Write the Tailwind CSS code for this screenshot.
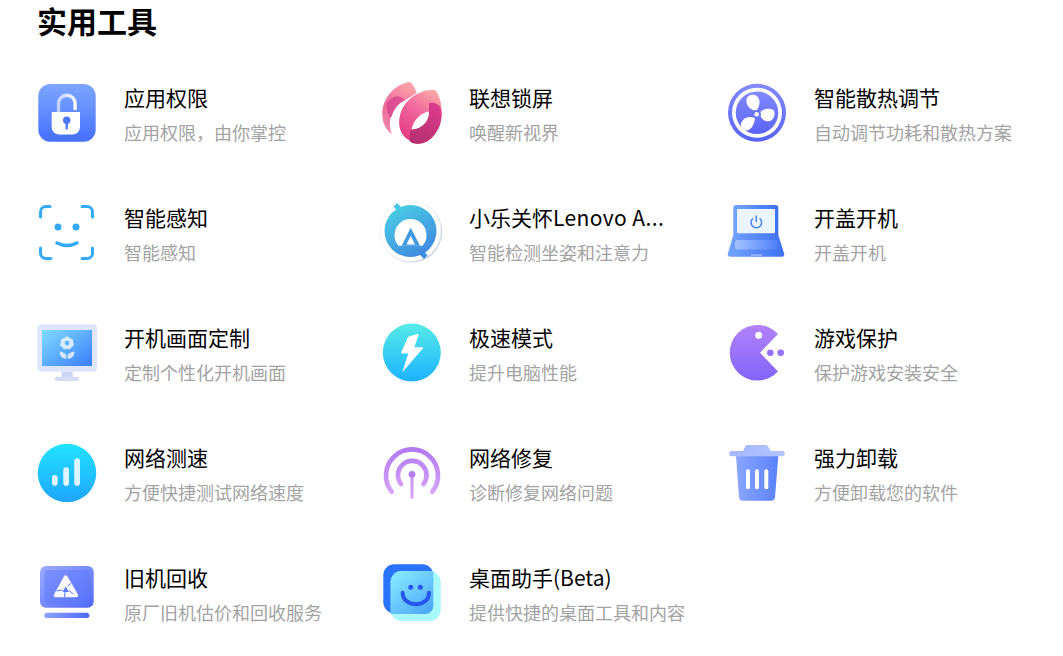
<!DOCTYPE html>
<html lang="zh-CN">
<head>
  <meta charset="UTF-8">
  <title>实用工具</title>
  <script src="https://cdn.jsdelivr.net/npm/@tailwindcss/browser@4"></script>
</head>
<body class="bg-white h-[656px] overflow-hidden font-['Noto_Sans_CJK_SC','Noto_Sans',sans-serif]">
  <svg width="0" height="0" class="absolute">
    <defs>
      <linearGradient id="gLock" x1="0" y1="0" x2="0" y2="1"><stop offset="0" stop-color="#7ea6ff"/><stop offset="1" stop-color="#4570fb"/></linearGradient>
      <linearGradient id="gShackle" gradientUnits="userSpaceOnUse" x1="20" y1="0" x2="40" y2="0"><stop offset="0" stop-color="#ffffff" stop-opacity=".55"/><stop offset="1" stop-color="#ffffff"/></linearGradient>
      <linearGradient id="gPetalL" x1="0.7" y1="0" x2="0.3" y2="1"><stop offset="0" stop-color="#fda3a8"/><stop offset=".6" stop-color="#ec6a9c"/><stop offset="1" stop-color="#f08aa8"/></linearGradient>
      <linearGradient id="gPetalR" x1="0.8" y1="0" x2="0.3" y2="1"><stop offset="0" stop-color="#fdaaa8"/><stop offset=".45" stop-color="#f2689c"/><stop offset="1" stop-color="#e23a82"/></linearGradient>
      <linearGradient id="gPetalD" x1="0.7" y1="0" x2="0.3" y2="1"><stop offset="0" stop-color="#dc3c8c"/><stop offset="1" stop-color="#b5306f"/></linearGradient>
      <linearGradient id="gFan" x1="0" y1="0" x2="0" y2="1"><stop offset="0" stop-color="#8389ff"/><stop offset="1" stop-color="#5a64f5"/></linearGradient>
      <linearGradient id="gAle" x1="0.2" y1="0" x2="0.8" y2="1"><stop offset="0" stop-color="#49cfe3"/><stop offset="1" stop-color="#3f86e0"/></linearGradient>
      <linearGradient id="gLaptop" x1="0" y1="0" x2="1" y2="0"><stop offset="0" stop-color="#74a4ff"/><stop offset="1" stop-color="#3d70f2"/></linearGradient>
      <linearGradient id="gPad" x1="0" y1="0" x2="1" y2="0"><stop offset="0" stop-color="#a4c3ff"/><stop offset="1" stop-color="#4f80f5"/></linearGradient>
      <linearGradient id="gScreen" x1="0" y1="0" x2="1" y2="1"><stop offset="0" stop-color="#7fdcff"/><stop offset="1" stop-color="#3a7dfb"/></linearGradient>
      <linearGradient id="gBolt" x1="0" y1="0" x2="0" y2="1"><stop offset="0" stop-color="#56ebe6"/><stop offset="1" stop-color="#1cb2ff"/></linearGradient>
      <linearGradient id="gPac" x1="0" y1="0" x2="0" y2="1"><stop offset="0" stop-color="#b183fb"/><stop offset="1" stop-color="#8164f8"/></linearGradient>
      <linearGradient id="gNet" x1="0" y1="0" x2="0" y2="1"><stop offset="0" stop-color="#22e3ff"/><stop offset="1" stop-color="#1fa5ff"/></linearGradient>
      <linearGradient id="gWifi" gradientUnits="userSpaceOnUse" x1="0" y1="4" x2="0" y2="56"><stop offset="0" stop-color="#af78f2"/><stop offset="1" stop-color="#dcaaf8"/></linearGradient>
      <linearGradient id="gTrash" x1="0" y1="0" x2="1" y2="0"><stop offset="0" stop-color="#8aa6ff"/><stop offset="1" stop-color="#5b82fb"/></linearGradient>
      <linearGradient id="gLid" x1="0" y1="0" x2="1" y2="0"><stop offset="0" stop-color="#a5b8fd"/><stop offset="1" stop-color="#b2c3ff"/></linearGradient>
      <linearGradient id="gOld" x1="0" y1="0" x2="1" y2="1"><stop offset="0" stop-color="#9cacff"/><stop offset="1" stop-color="#4f69fb"/></linearGradient>
      <linearGradient id="gBar" x1="0" y1="0" x2="1" y2="0"><stop offset="0" stop-color="#8ea2ff"/><stop offset="1" stop-color="#4f69fb"/></linearGradient>
      <linearGradient id="gFace" x1="0" y1="0" x2="0.8" y2="1"><stop offset="0" stop-color="#8ceeff"/><stop offset="1" stop-color="#4faaf8"/></linearGradient>
    </defs>
  </svg>

  <h1 class="pl-[37px] h-[53px] text-[30px] leading-[40px] font-bold text-black">实用工具</h1>

  <div class="grid grid-cols-[345px_345px_300px] auto-rows-[120px] pl-[37px]">

    <!-- 应用权限 -->
    <div class="flex items-center gap-[27px]">
      <svg class="w-[60px] h-[60px] shrink-0" viewBox="0 0 60 60">
        <rect x="1.300" y="1" width="57.400" height="57.700" rx="12" fill="url(#gLock)"/>
        <path d="M21.500 29V20.500a8.300 8.300 0 0 1 16.600 0V27" fill="none" stroke="url(#gShackle)" stroke-width="3.400"/>
        <path d="M14.700 29H43V44a7.500 7.500 0 0 1-7.500 7.500H22.200A7.500 7.500 0 0 1 14.700 44Z" fill="#fff"/>
        <circle cx="29.700" cy="37.300" r="3.700" fill="#4a76fb"/>
        <rect x="28.500" y="38" width="2.400" height="8.500" rx="1.200" fill="#4a76fb"/>
      </svg>
      <div class="min-w-0">
        <div class="text-[21px] leading-[30px] text-black mb-[7px]">应用权限</div>
        <div class="text-[18px] leading-[26px] text-[#a3a3a3]">应用权限，由你掌控</div>
      </div>
    </div>

    <!-- 联想锁屏 -->
    <div class="flex items-center gap-[27px]">
      <svg class="w-[60px] h-[60px] shrink-0 overflow-visible" viewBox="0 0 60 60">
        <path d="M28-1C16 0 1 12 .3 30 0 40 4 47 9.700 51.300 7 42 7.500 36 10.500 30 13 24 17 20 22 18L34.700 10C33 5 31 1 28-1Z" fill="url(#gPetalL)"/>
        <path d="M5 20C10 12 18 11 23 17 16 20 12 26 9 35 5 30 4 25 5 20Z" fill="#d9488f" fill-opacity=".85"/>
        <path d="M53 6.700C40 6 23 14 18 32 15 44 20 54 27 57 30 60 34 61 38 60.700 48 60 58 50 59.700 30 60 20 57 11 53 6.700Z" fill="url(#gPetalR)"/>
        <path d="M47 20C52 19 57 21 58.500 25 60 30 60 35 58 42 54 52 46 60 36 60.700 32 61 29 60 27.500 57.500 27.500 54 28 50 29 46L47 29Z" fill="url(#gPetalD)"/>
        <path d="M29.500 46.500C31 38 38 30 47 28.500 47.500 37 41 46 29.500 46.500Z" fill="#fff"/>
      </svg>
      <div class="min-w-0">
        <div class="text-[21px] leading-[30px] text-black mb-[7px]">联想锁屏</div>
        <div class="text-[18px] leading-[26px] text-[#a3a3a3]">唤醒新视界</div>
      </div>
    </div>

    <!-- 智能散热调节 -->
    <div class="flex items-center gap-[27px]">
      <svg class="w-[60px] h-[60px] shrink-0" viewBox="0 0 60 60">
        <circle cx="30" cy="29.700" r="29" fill="url(#gFan)"/>
        <circle cx="30" cy="29.700" r="25" fill="#fff"/>
        <circle cx="30" cy="29.700" r="21.300" fill="url(#gFan)"/>
        <path d="M29.500 27.500C23 27.500 18.500 22 19.500 16 21 11.500 27 10.500 30.500 13.500 34 18 32.500 23.500 29.500 27.500Z" fill="#fff"/>
        <path d="M32.500 30C36 25.500 42.500 24.500 46.500 27 49 30.500 47 36.500 43 38 38.500 39.500 33.500 36 32.500 30Z" fill="#fff"/>
        <path d="M28 35C27.500 40.500 24.500 47 20 47.500 15.500 48 12.500 43.500 14.500 39 17 34.500 23 32.500 28 35Z" fill="#fff"/>
        <circle cx="29.700" cy="31.300" r="4.300" fill="#6d75fa"/>
        <circle cx="29.700" cy="31.300" r="2.300" fill="#fff"/>
      </svg>
      <div class="min-w-0">
        <div class="text-[21px] leading-[30px] text-black mb-[7px]">智能散热调节</div>
        <div class="text-[18px] leading-[26px] text-[#a3a3a3]">自动调节功耗和散热方案</div>
      </div>
    </div>

    <!-- 智能感知 -->
    <div class="flex items-center gap-[27px]">
      <svg class="w-[60px] h-[60px] shrink-0" viewBox="0 0 60 60" fill="none" stroke="#35a9fb" stroke-width="3" stroke-linecap="round">
        <path d="M13 3.500H9a5.500 5.500 0 0 0-5.500 5.500v5"/>
        <path d="M45 3.500h5a5.500 5.500 0 0 1 5.500 5.500v5"/>
        <path d="M3.500 45v5A5.500 5.500 0 0 0 9 55.500h5"/>
        <path d="M55.500 45v5a5.500 5.500 0 0 1-5.500 5.500h-5"/>
        <path d="M20 40q10 5 20 0" stroke-width="3.500"/>
        <circle cx="21" cy="24" r="3.500" fill="#35a9fb" stroke="none"/>
        <circle cx="39" cy="24" r="3.500" fill="#35a9fb" stroke="none"/>
      </svg>
      <div class="min-w-0">
        <div class="text-[21px] leading-[30px] text-black mb-[7px]">智能感知</div>
        <div class="text-[18px] leading-[26px] text-[#a3a3a3]">智能感知</div>
      </div>
    </div>

    <!-- 小乐关怀 -->
    <div class="flex items-center gap-[27px]">
      <svg class="w-[60px] h-[60px] shrink-0 overflow-visible" viewBox="0 0 60 60">
        <circle cx="29.300" cy="28.800" r="30.800" fill="#c6ccd2"/>
        <circle cx="28.500" cy="28" r="30.500" fill="#fff" stroke="#eef0f2" stroke-width=".8"/>
        <circle cx="28.500" cy="28" r="26" fill="url(#gAle)"/>
        <path d="M11.500 3.500L15 0 21 6 17 10Z" fill="#46c8e4"/>
        <path d="M45.500 52.500L42 56 36 50 40 46Z" fill="#3f8ee0"/>
        <path d="M16.500 42.700A16 16 0 1 1 40.500 42.700Z" fill="#fff"/>
        <path d="M28.700 24.700L38 42.700H19.700Z" fill="#3f9ae2"/>
        <path d="M28.700 32.700L33 41.500H24.500Z" fill="#fff"/>
      </svg>
      <div class="min-w-0">
        <div class="whitespace-nowrap text-[21px] leading-[30px] text-black mb-[7px]">小乐关怀<span class="tracking-[0.4px]">Lenovo A...</span></div>
        <div class="text-[18px] leading-[26px] text-[#a3a3a3]">智能检测坐姿和注意力</div>
      </div>
    </div>

    <!-- 开盖开机 -->
    <div class="flex items-center gap-[27px]">
      <svg class="w-[60px] h-[60px] shrink-0" viewBox="0 0 60 60">
        <path d="M6.300 5a3 3 0 0 1 3-3h39a3 3 0 0 1 3 3v28h-45Z" fill="url(#gLaptop)"/>
        <rect x="10" y="6" width="38" height="24.300" rx="1" fill="#eaf5ff"/>
        <path d="M6.300 32h45L57.300 51a2.500 2.500 0 0 1-2.500 2.700H3.200A2.500 2.500 0 0 1 .7 51Z" fill="url(#gLaptop)"/>
        <rect x="8" y="37" width="42.700" height="9.500" rx="2.500" fill="url(#gPad)"/>
        <rect x="24" y="51.500" width="11" height="1.200" fill="#a9c6ff"/>
        <path d="M25.600 15.800a5.300 5.300 0 1 0 7.500 0" fill="none" stroke="#4e82f3" stroke-width="1.500" stroke-linecap="round"/>
        <path d="M29.300 13v5.500" stroke="#4e82f3" stroke-width="1.500" stroke-linecap="round"/>
      </svg>
      <div class="min-w-0">
        <div class="text-[21px] leading-[30px] text-black mb-[7px]">开盖开机</div>
        <div class="text-[18px] leading-[26px] text-[#a3a3a3]">开盖开机</div>
      </div>
    </div>

    <!-- 开机画面定制 -->
    <div class="flex items-center gap-[27px]">
      <svg class="w-[60px] h-[60px] shrink-0" viewBox="0 0 60 60">
        <rect x="0.300" y="1.300" width="59.700" height="47.400" rx="4" fill="#dfe6fb"/>
        <rect x="5" y="7" width="50" height="36" fill="url(#gScreen)"/>
        <rect x="24.700" y="48.700" width="11" height="6" fill="#ccd6f4"/>
        <rect x="18" y="53.700" width="24" height="4.300" rx="1.500" fill="#d6def7"/>
        <g fill="#fff" fill-opacity=".75">
          <path fill-rule="evenodd" d="M30 13.500a2.800 2.800 0 0 1 2.700 2 2.800 2.800 0 0 1 3.300 3.800 2.800 2.800 0 0 1-1.300 4.800 2.800 2.800 0 0 1-4.700 1.400 2.800 2.800 0 0 1-4.700-1.400 2.800 2.800 0 0 1-1.300-4.800 2.800 2.800 0 0 1 3.300-3.800 2.800 2.800 0 0 1 2.700-2Zm0 4.300a2.300 2.300 0 1 0 0 4.600 2.300 2.300 0 0 0 0-4.600Z"/>
          <path d="M22.500 28.500q5 .5 6.800 3.800V36q-6.500-.5-6.800-7.500Z"/>
          <path d="M37.500 28.500q-5 .5-6.800 3.800V36q6.500-.5 6.800-7.500Z"/>
        </g>
      </svg>
      <div class="min-w-0">
        <div class="text-[21px] leading-[30px] text-black mb-[7px]">开机画面定制</div>
        <div class="text-[18px] leading-[26px] text-[#a3a3a3]">定制个性化开机画面</div>
      </div>
    </div>

    <!-- 极速模式 -->
    <div class="flex items-center gap-[27px]">
      <svg class="w-[60px] h-[60px] shrink-0" viewBox="0 0 60 60">
        <circle cx="29.800" cy="29.500" r="29" fill="url(#gBolt)"/>
        <path d="M34.500 11.200L27 13.500a2 2 0 0 0-1.300 1.200L19.300 29a1 1 0 0 0 1 1.400h6L20.300 49.300 41 25.200a.6.6 0 0 0-.5-1h-8.200l4-11.200a1.300 1.300 0 0 0-1.800-1.800Z" fill="#fff"/>
      </svg>
      <div class="min-w-0">
        <div class="text-[21px] leading-[30px] text-black mb-[7px]">极速模式</div>
        <div class="text-[18px] leading-[26px] text-[#a3a3a3]">提升电脑性能</div>
      </div>
    </div>

    <!-- 游戏保护 -->
    <div class="flex items-center gap-[27px]">
      <svg class="w-[60px] h-[60px] shrink-0" viewBox="0 0 60 60">
        <path d="M51 11A27.800 27.800 0 1 0 51 48.500L33 29.700Z" fill="url(#gPac)"/>
        <circle cx="31.700" cy="12.300" r="3.500" fill="#fff"/>
        <circle cx="43.300" cy="29.700" r="3.300" fill="#9472f9"/>
        <circle cx="53.700" cy="29.700" r="3.300" fill="#9472f9"/>
      </svg>
      <div class="min-w-0">
        <div class="text-[21px] leading-[30px] text-black mb-[7px]">游戏保护</div>
        <div class="text-[18px] leading-[26px] text-[#a3a3a3]">保护游戏安装安全</div>
      </div>
    </div>

    <!-- 网络测速 -->
    <div class="flex items-center gap-[27px]">
      <svg class="w-[60px] h-[60px] shrink-0" viewBox="0 0 60 60">
        <circle cx="30" cy="30" r="29.300" fill="url(#gNet)"/>
        <rect x="15" y="32" width="5.700" height="10.700" rx="2.800" fill="#fff" fill-opacity=".85"/>
        <rect x="26.300" y="24.300" width="5.700" height="18.400" rx="2.800" fill="#fff" fill-opacity=".85"/>
        <rect x="37.300" y="15.300" width="5.700" height="27.400" rx="2.800" fill="#fff" fill-opacity=".85"/>
      </svg>
      <div class="min-w-0">
        <div class="text-[21px] leading-[30px] text-black mb-[7px]">网络测速</div>
        <div class="text-[18px] leading-[26px] text-[#a3a3a3]">方便快捷测试网络速度</div>
      </div>
    </div>

    <!-- 网络修复 -->
    <div class="flex items-center gap-[27px]">
      <svg class="w-[60px] h-[60px] shrink-0" viewBox="0 0 60 60" fill="none" stroke="url(#gWifi)" stroke-linecap="round">
        <path d="M9.700 48.700A26 26 0 1 1 50.300 48.700" stroke-width="4.700"/>
        <path d="M19 41A14.300 14.300 0 1 1 41.500 41" stroke-width="4.700"/>
        <path d="M30 32V54.500" stroke-width="3.200"/>
        <circle cx="30" cy="31.300" r="3.400" fill="#b57ff3" stroke="none"/>
      </svg>
      <div class="min-w-0">
        <div class="text-[21px] leading-[30px] text-black mb-[7px]">网络修复</div>
        <div class="text-[18px] leading-[26px] text-[#a3a3a3]">诊断修复网络问题</div>
      </div>
    </div>

    <!-- 强力卸载 -->
    <div class="flex items-center gap-[27px]">
      <svg class="w-[60px] h-[60px] shrink-0" viewBox="0 0 60 60">
        <path d="M9 13h42.300L48 54a4 4 0 0 1-4 3.700H16a4 4 0 0 1-4-3.700Z" fill="url(#gTrash)"/>
        <path d="M20 2h19a2 2 0 0 1 1.600 1L44 8H16l2.400-5A2 2 0 0 1 20 2Z" fill="url(#gLid)"/>
        <rect x="2.300" y="8" width="55.400" height="5.300" rx="2" fill="url(#gLid)"/>
        <rect x="19" y="26.300" width="4" height="20" rx="2" fill="#fff"/>
        <rect x="28" y="26.300" width="4" height="20" rx="2" fill="#fff"/>
        <rect x="37.300" y="26.300" width="4" height="20" rx="2" fill="#fff"/>
      </svg>
      <div class="min-w-0">
        <div class="text-[21px] leading-[30px] text-black mb-[7px]">强力卸载</div>
        <div class="text-[18px] leading-[26px] text-[#a3a3a3]">方便卸载您的软件</div>
      </div>
    </div>

    <!-- 旧机回收 -->
    <div class="flex items-center gap-[27px]">
      <svg class="w-[60px] h-[60px] shrink-0" viewBox="0 0 60 60">
        <rect x="3" y="3" width="53.700" height="41.700" rx="6" fill="url(#gOld)"/>
        <rect x="7.300" y="7" width="45" height="33.500" rx="3" fill="#5f78fb" fill-opacity=".45"/>
        <rect x="7.300" y="49.700" width="45" height="5.400" rx="2.700" fill="url(#gBar)"/>
        <path d="M28.700 12.300a2 2 0 0 1 1.700 1L41 31.500a1.800 1.800 0 0 1-1.500 2.700H18.500a1.800 1.800 0 0 1-1.500-2.700L27 13.300a2 2 0 0 1 1.700-1Z" fill="#fff" fill-opacity=".95"/>
        <path d="M28.700 23.500L32 29H25.500Z" fill="#6076fb"/>
        <path d="M25.500 27L19.500 27.800M28 29L27.500 34.500M30.500 23L34 20.500M32 27.500L36 31" stroke="#6076fb" stroke-width="1" fill="none"/>
      </svg>
      <div class="min-w-0">
        <div class="text-[21px] leading-[30px] text-black mb-[7px]">旧机回收</div>
        <div class="text-[18px] leading-[26px] text-[#a3a3a3]">原厂旧机估价和回收服务</div>
      </div>
    </div>

    <!-- 桌面助手 -->
    <div class="flex items-center gap-[27px]">
      <svg class="w-[60px] h-[60px] shrink-0" viewBox="0 0 60 60">
        <rect x="1.300" y="1.300" width="50" height="49" rx="11" fill="#2a73ff"/>
        <rect x="8.700" y="8" width="50" height="50" rx="11" fill="#a9f8fb"/>
        <path d="M19.700 8H49a9 9 0 0 1 2.300.5V43a8 8 0 0 1-8 8H8.700V19a11 11 0 0 1 11-11Z" fill="url(#gFace)"/>
        <circle cx="28.700" cy="24.300" r="2.500" fill="#2456f0"/>
        <circle cx="38.300" cy="24.300" r="2.500" fill="#2456f0"/>
        <path d="M20.700 29.700c0 7 5.500 11.500 13.200 11.500S47 36.700 47 29.700" fill="none" stroke="#2456f0" stroke-width="4" stroke-linecap="round"/>
      </svg>
      <div class="min-w-0">
        <div class="text-[21px] leading-[30px] text-black mb-[7px]">桌面助手(Beta)</div>
        <div class="text-[18px] leading-[26px] text-[#a3a3a3]">提供快捷的桌面工具和内容</div>
      </div>
    </div>

  </div>
</body>
</html>
